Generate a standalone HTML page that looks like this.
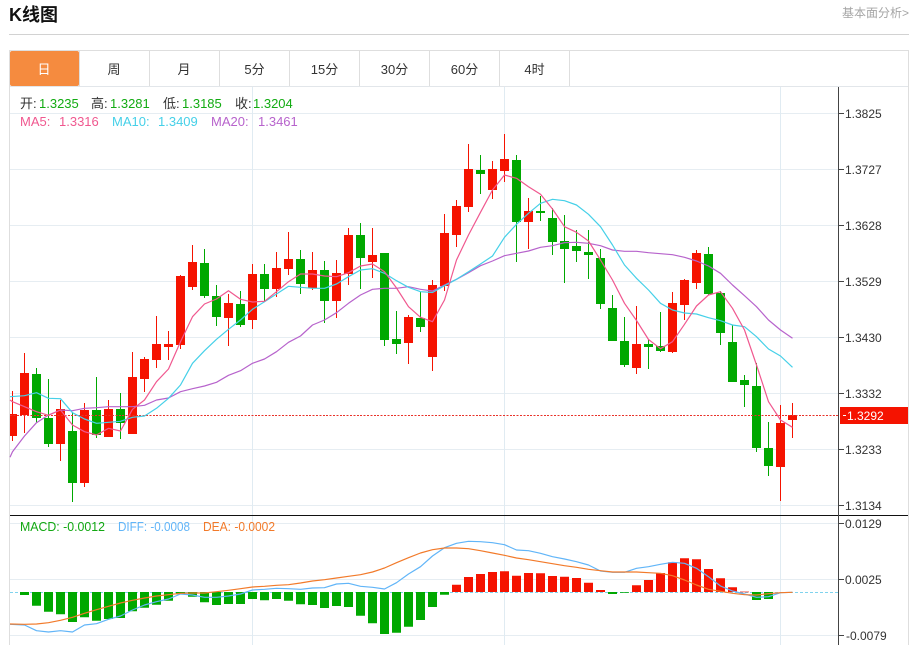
<!DOCTYPE html>
<html lang="zh">
<head>
<meta charset="utf-8">
<title>K线图</title>
<style>
html,body{margin:0;padding:0;background:#fff;width:913px;height:645px;overflow:hidden}
svg{display:block}
text{font-family:"Liberation Sans","Noto Sans CJK SC",sans-serif}
</style>
</head>
<body>
<svg width="913" height="645" viewBox="0 0 913 645" xmlns="http://www.w3.org/2000/svg">
<text x="9" y="21" font-size="18" font-weight="bold" fill="#111">K线图</text>
<text x="909" y="17" font-size="12" fill="#a5a5a5" text-anchor="end">基本面分析&gt;</text>
<rect x="9" y="34" width="900" height="1" fill="#d2d2d2"/>

<g shape-rendering="crispEdges">
<rect x="9" y="50" width="900" height="1" fill="#dedede"/>
<rect x="9" y="50" width="1" height="595" fill="#dedede"/>
<rect x="908" y="50" width="1" height="595" fill="#dedede"/>
<rect x="10" y="86" width="898" height="1" fill="#e2e6ea"/>
<path d="M79.5 51V86M149.5 51V86M219.5 51V86M289.5 51V86M359.5 51V86M429.5 51V86M499.5 51V86M569.5 51V86" stroke="#dedede"/>
<path d="M10 113.5H838M10 169.5H838M10 225.5H838M10 281.5H838M10 337.5H838M10 393.5H838M10 449.5H838M10 505.5H838M10 523.5H838M10 579.5H838M10 635.5H838" stroke="#e6edf2"/>
<path d="M252.5 87V645M504.5 87V645M780.5 87V645" stroke="#e0ebf2"/>
</g>
<rect x="10" y="51" width="69" height="35" rx="2" fill="#f58b3f"/>

<g font-size="13" fill="#333" text-anchor="middle">
<text x="44" y="74" fill="#fff">日</text>
<text x="114" y="74">周</text>
<text x="184" y="74">月</text>
<text x="254.5" y="74">5分</text>
<text x="324.5" y="74">15分</text>
<text x="394.5" y="74">30分</text>
<text x="464.5" y="74">60分</text>
<text x="534.5" y="74">4时</text>
</g>

<!-- candle wicks & bodies -->
<g shape-rendering="crispEdges">
<path stroke="#f51300" fill="none" d="M12.5 391V441M24.5 353V433M60.5 400V461M84.5 403V487M108.5 400V437M132.5 352V434M144.5 357V392M156.5 316V368M168.5 331V360M180.5 275V349M192.5 245V290M228.5 294V346M252.5 264V329M276.5 252V297M288.5 232V275M312.5 252V290M336.5 260V318M348.5 228V285M372.5 228V278M408.5 315V364M432.5 280V371M444.5 214V291M456.5 200V247M468.5 144V212M492.5 161V199M504.5 134V182M528.5 198V249M636.5 306V374M672.5 292V353M684.5 279V320M696.5 250V289M780.5 405V501M792.5 403V438"/>
<path fill="#f51300" d="M10 414h7v22h-7zM20 373h9v42h-9zM56 409h9v35h-9zM80 410h9v73h-9zM104 409h9v28h-9zM128 377h9v57h-9zM140 359h9v20h-9zM152 344h9v16h-9zM164 344h9v3h-9zM176 276h9v69h-9zM188 262h9v25h-9zM224 303h9v15h-9zM248 274h9v46h-9zM272 268h9v21h-9zM284 259h9v10h-9zM308 270h9v18h-9zM332 273h9v28h-9zM344 235h9v39h-9zM368 255h9v7h-9zM404 317h9v26h-9zM428 285h9v72h-9zM440 233h9v53h-9zM452 206h9v29h-9zM464 169h9v38h-9zM488 169h9v21h-9zM500 159h9v12h-9zM524 211h9v11h-9zM632 344h9v24h-9zM668 303h9v49h-9zM680 280h9v25h-9zM692 253h9v30h-9zM776 423h9v44h-9zM788 415h9v5h-9z"/>
<path stroke="#00a800" fill="none" d="M36.5 368V423M48.5 379V447M72.5 412V502M96.5 377V438M120.5 393V439M204.5 249V298M216.5 285V326M240.5 291V327M264.5 264V302M300.5 250V294M324.5 261V323M360.5 223V289M384.5 253V346M396.5 311V354M420.5 292V332M480.5 155V194M516.5 155V262M540.5 196V221M552.5 208V255M564.5 215V283M576.5 230V262M588.5 230V279M600.5 249V309M612.5 295V341M624.5 317V367M648.5 340V369M660.5 312V352M708.5 247V295M720.5 291V345M732.5 325V382M744.5 375V407M756.5 363V452M768.5 422V476"/>
<path fill="#00a800" d="M32 374h9v44h-9zM44 418h9v26h-9zM68 431h9v52h-9zM92 410h9v25h-9zM116 409h9v14h-9zM200 263h9v33h-9zM212 296h9v21h-9zM236 304h9v21h-9zM260 274h9v15h-9zM296 259h9v25h-9zM320 270h9v31h-9zM356 235h9v23h-9zM380 253h9v87h-9zM392 339h9v5h-9zM416 318h9v9h-9zM476 170h9v4h-9zM512 160h9v62h-9zM536 211h9v2h-9zM548 218h9v24h-9zM560 241h9v8h-9zM572 246h9v5h-9zM584 252h9v3h-9zM596 258h9v46h-9zM608 308h9v33h-9zM620 341h9v24h-9zM644 344h9v3h-9zM656 346h9v5h-9zM704 254h9v40h-9zM716 293h9v40h-9zM728 342h9v40h-9zM740 380h9v5h-9zM752 386h9v62h-9zM764 448h9v18h-9z"/>
</g>

<!-- last price line -->
<path d="M10 415.5H838" stroke="#e8322a" stroke-width="1" stroke-dasharray="2 1.4" shape-rendering="crispEdges"/>

<!-- moving averages -->
<g fill="none" stroke-width="1.2" stroke-linejoin="round">
<polyline stroke="#b763cc" points="10,457.3 12.5,451.7 24.5,436 36.5,422.7 48.5,415 60.5,410 72.5,410.7 84.5,408.3 96.5,407.7 108.5,406.7 120.5,406.7 132.5,406.7 144.5,405.3 156.5,400 168.5,398 180.5,391.7 192.5,388.7 204.5,386 216.5,382.3 228.5,375.3 240.5,370.7 252.5,363.3 264.5,359 276.5,351.7 288.5,342.3 300.5,336 312.5,325 324.5,320 336.5,312.7 348.5,303.3 360.5,295 372.5,289.3 384.5,288.3 396.5,288.3 408.5,286.7 420.5,289.3 432.5,291 444.5,285 456.5,279.3 468.5,272.7 480.5,265.7 492.5,261 504.5,255.7 516.5,253.3 528.5,251 540.5,247.3 552.5,245.7 564.5,242.7 576.5,242.3 588.5,243.3 600.5,245.7 612.5,250 624.5,251.3 636.5,251.3 648.5,252.7 660.5,253.7 672.5,254.7 684.5,257.3 696.5,261 708.5,266 720.5,273.3 732.5,285 744.5,295.7 756.5,306.7 768.5,320 780.5,330 792.5,338.3"/>
<polyline stroke="#45d0e8" points="10,396.7 24.5,395.7 36.5,392.7 48.5,398.3 60.5,398.7 72.5,412.7 84.5,419 96.5,423.3 108.5,422.3 120.5,421.3 132.5,417.3 144.5,416 156.5,408.3 168.5,398.3 180.5,385 192.5,363.3 204.5,350.7 216.5,339.3 228.5,329.3 240.5,320 252.5,309.3 264.5,301.7 276.5,294 288.5,286.3 300.5,287.3 312.5,288.3 324.5,288.3 336.5,284 348.5,276.7 360.5,270 372.5,268.7 384.5,273.3 396.5,280.7 408.5,287.3 420.5,291.7 432.5,292.5 444.5,285.7 456.5,279.3 468.5,271.7 480.5,264 492.5,256 504.5,237.3 516.5,224.3 528.5,213.3 540.5,203.3 552.5,199.3 564.5,200.7 576.5,205 588.5,214.3 600.5,226.7 612.5,245 624.5,265 636.5,278.3 648.5,290 660.5,303.3 672.5,310 684.5,313 696.5,314 708.5,317.7 720.5,320.7 732.5,325 744.5,326.7 756.5,336.7 768.5,349 780.5,356 792.5,367.3"/>
<polyline stroke="#f0588f" points="10,400 12.5,401.7 24.5,406.7 36.5,411.7 48.5,415.3 60.5,410 72.5,425 84.5,431.7 96.5,435 108.5,428.3 120.5,431 132.5,409.3 144.5,400 156.5,381.7 168.5,369 180.5,341.7 192.5,316.7 204.5,304 216.5,299 228.5,290.7 240.5,299.3 252.5,302 264.5,301.3 276.5,291.7 288.5,281.7 300.5,274 312.5,274 324.5,276 336.5,276.7 348.5,272.7 360.5,266 372.5,264 384.5,271.7 396.5,288 408.5,306.7 420.5,317.3 432.5,321.7 444.5,300 456.5,260 468.5,235 480.5,212.3 492.5,190 504.5,175 516.5,178.3 528.5,186.7 540.5,194.3 552.5,209 564.5,226.7 576.5,232.3 588.5,241 600.5,260 612.5,280 624.5,303.3 636.5,320.5 648.5,339.5 660.5,348.7 672.5,341.7 684.5,324.3 696.5,306 708.5,295 720.5,291.7 732.5,308.3 744.5,330 756.5,365 768.5,401.7 780.5,420 792.5,427.3"/>
</g>

<!-- MACD -->
<path d="M10 592.5H838" stroke="#7fd3ee" stroke-dasharray="3 2" shape-rendering="crispEdges"/>
<path fill="#00a800" d="M20 592h9v3h-9zM32 592h9v13.7h-9zM44 592h9v19.7h-9zM56 592h9v22.3h-9zM68 592h9v30h-9zM80 592h9v25.3h-9zM92 592h9v28.7h-9zM104 592h9v27h-9zM116 592h9v26h-9zM128 592h9v19.3h-9zM140 592h9v15.7h-9zM152 592h9v12.7h-9zM164 592h9v8.7h-9zM176 592h9v2.3h-9zM188 592h9v4.7h-9zM200 592h9v10.3h-9zM212 592h9v13h-9zM224 592h9v12h-9zM236 592h9v12h-9zM248 592h9v7h-9zM260 592h9v8.3h-9zM272 592h9v7h-9zM284 592h9v8.7h-9zM296 592h9v12.3h-9zM308 592h9v13h-9zM320 592h9v16h-9zM332 592h9v14h-9zM344 592h9v15h-9zM356 592h9v23.7h-9zM368 592h9v31.3h-9zM380 592h9v42h-9zM392 592h9v40.7h-9zM404 592h9v34.7h-9zM416 592h9v28h-9zM428 592h9v15h-9zM440 592h9v2.7h-9zM608 592h9v2h-9zM620 592h9v.8h-9zM752 592h9v8h-9zM764 592h9v7h-9z"/>
<path fill="#f51300" d="M452 584.7h9v7.3h-9zM464 577h9v15h-9zM476 574h9v18h-9zM488 572h9v20h-9zM500 571.3h9v20.7h-9zM512 575.7h9v16.3h-9zM524 573h9v19h-9zM536 573.3h9v18.7h-9zM548 576h9v16h-9zM560 576.7h9v15.3h-9zM572 578h9v14h-9zM584 582.7h9v9.3h-9zM596 590h9v2h-9zM632 585.3h9v6.7h-9zM644 580h9v12h-9zM656 573h9v19h-9zM668 562.3h9v29.7h-9zM680 558.3h9v33.7h-9zM692 559.3h9v32.7h-9zM704 569h9v23h-9zM716 578.3h9v13.7h-9zM728 587.3h9v4.7h-9zM740 591.6h9v.6h-9z"/>
<g fill="none" stroke-width="1.2" stroke-linejoin="round">
<polyline stroke="#61b5f8" points="10,624.3 24.5,625 36.5,630.7 48.5,632 60.5,630.7 72.5,632 84.5,625 96.5,623.7 108.5,619.3 120.5,616 132.5,610 144.5,605 156.5,601.7 168.5,599 180.5,594 192.5,595 204.5,597.3 216.5,597.3 228.5,596 240.5,594 252.5,590 264.5,589.3 276.5,588.3 288.5,588.7 300.5,589.3 312.5,588 324.5,587.7 336.5,584 348.5,583.3 360.5,586.3 372.5,587.3 384.5,589 396.5,582.7 408.5,574 420.5,566.7 432.5,556 444.5,547.7 456.5,543.3 468.5,541.3 480.5,541.7 492.5,542.7 504.5,544.7 516.5,550 528.5,550.7 540.5,553.3 552.5,556.7 564.5,559 576.5,561.7 588.5,565 600.5,571 612.5,572.3 624.5,572.3 636.5,568.3 648.5,566.7 660.5,564.3 672.5,562.3 684.5,563.3 696.5,568.3 708.5,576.7 720.5,586 732.5,591 744.5,594 756.5,597.3 768.5,596.7 780.5,592.7 792.5,592.3"/>
<polyline stroke="#f27a2a" points="10,624 24.5,624.3 36.5,624 48.5,622.7 60.5,620.3 72.5,617.3 84.5,613.3 96.5,609.7 108.5,606.3 120.5,603 132.5,600.3 144.5,598 156.5,596 168.5,594.7 180.5,593.3 192.5,593 204.5,593 216.5,591.7 228.5,590.3 240.5,588.7 252.5,587 264.5,586.3 276.5,585.3 288.5,584.7 300.5,583 312.5,581 324.5,579.7 336.5,578 348.5,576.3 360.5,574.7 372.5,572 384.5,568 396.5,562.7 408.5,557.7 420.5,553 432.5,549.7 444.5,548 456.5,548 468.5,548.7 480.5,550.7 492.5,553 504.5,555.3 516.5,558 528.5,559.7 540.5,561.7 552.5,563.7 564.5,565.7 576.5,567.3 588.5,569.3 600.5,570.7 612.5,572 624.5,572 636.5,572 648.5,572.7 660.5,573.3 672.5,575.7 684.5,580 696.5,585 708.5,589.3 720.5,591.3 732.5,593.3 744.5,594.7 756.5,595 768.5,593.7 780.5,592.7 792.5,592.3"/>
</g>

<!-- separators and axis -->
<g shape-rendering="crispEdges">
<rect x="10" y="515" width="898" height="1" fill="#111"/>
<rect x="838" y="87" width="1" height="558" fill="#444"/>
<path d="M839 113.5h5M839 169.5h5M839 225.5h5M839 281.5h5M839 337.5h5M839 393.5h5M839 449.5h5M839 505.5h5M839 523.5h5M839 579.5h5M839 635.5h5" stroke="#444"/>
<rect x="840" y="407" width="68" height="17" fill="#f51300"/>
<rect x="843" y="415" width="3" height="1" fill="#fff"/>
</g>
<g font-size="12" fill="#333">
<text x="845" y="118">1.3825</text>
<text x="845" y="174">1.3727</text>
<text x="845" y="230">1.3628</text>
<text x="845" y="286">1.3529</text>
<text x="845" y="342">1.3430</text>
<text x="845" y="398">1.3332</text>
<text x="845" y="454">1.3233</text>
<text x="845" y="510">1.3134</text>
<text x="845" y="528">0.0129</text>
<text x="845" y="584">0.0025</text>
<text x="846" y="640">-0.0079</text>
<text x="847" y="420" fill="#fff">1.3292</text>
</g>

<!-- legends -->
<g font-size="13" fill="#333">
<text x="20" y="108">开:</text><text x="39" y="108" fill="#12ab12">1.3235</text>
<text x="91" y="108">高:</text><text x="110" y="108" fill="#12ab12">1.3281</text>
<text x="163" y="108">低:</text><text x="182" y="108" fill="#12ab12">1.3185</text>
<text x="235" y="108">收:</text><text x="253" y="108" fill="#12ab12">1.3204</text>
<text x="20" y="126" fill="#f0588f">MA5:</text><text x="59" y="126" fill="#f0588f">1.3316</text>
<text x="112" y="126" fill="#45d0e8">MA10:</text><text x="158" y="126" fill="#45d0e8">1.3409</text>
<text x="211" y="126" fill="#b763cc">MA20:</text><text x="258" y="126" fill="#b763cc">1.3461</text>
</g>
<g font-size="12.5">
<text x="20" y="531" fill="#12a812" textLength="85" lengthAdjust="spacingAndGlyphs">MACD: -0.0012</text>
<text x="118" y="531" fill="#61b5f8" textLength="72" lengthAdjust="spacingAndGlyphs">DIFF: -0.0008</text>
<text x="203" y="531" fill="#f27a2a" textLength="72" lengthAdjust="spacingAndGlyphs">DEA: -0.0002</text>
</g>
</svg>
</body>
</html>
